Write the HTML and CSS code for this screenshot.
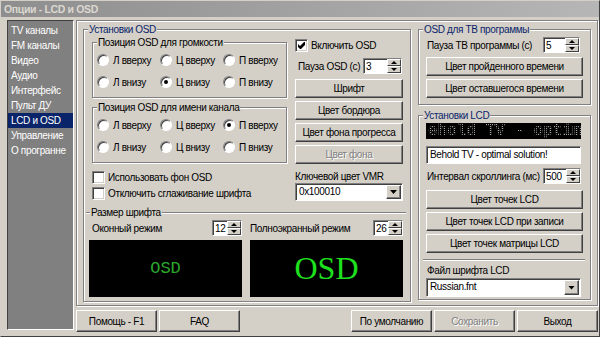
FILE: index.html
```html
<!DOCTYPE html>
<html lang="ru">
<head>
    <meta charset="UTF-8">
    <meta name="viewport" content="width=device-width, initial-scale=1.0">
    <title>Опции - LCD и OSD</title>
    <link rel="stylesheet" href="styles.css">
</head>
<body>

<div class="window">
    <div class="titlebar">Опции - LCD и OSD</div>

    <div class="frame">
        <ul class="sidebar">
            <li>TV каналы</li>
            <li>FM каналы</li>
            <li>Видео</li>
            <li>Аудио</li>
            <li>Интерфейс</li>
            <li>Пульт ДУ</li>
            <li class="active">LCD и OSD</li>
            <li>Управление</li>
            <li>О програнне</li>
        </ul>

        <div class="main">
            <div class="panel">

                <!-- Установки OSD -->
                <div class="group osd">
                    <div class="legend title">Установки OSD</div>
                    <div class="osd-top">
                        <div class="osd-left">
                            <div class="group pos">
                                <div class="legend">Позиция OSD для громкости</div>
                                <div class="radios">
                                    <div class="opt"><span class="radio"></span>Л вверху</div>
                                    <div class="opt"><span class="radio"></span>Ц вверху</div>
                                    <div class="opt"><span class="radio"></span>П вверху</div>
                                    <div class="opt"><span class="radio"></span>Л внизу</div>
                                    <div class="opt"><span class="radio on"></span>Ц внизу</div>
                                    <div class="opt"><span class="radio"></span>П внизу</div>
                                </div>
                            </div>
                            <div class="group pos second">
                                <div class="legend">Позиция OSD для имени канала</div>
                                <div class="radios">
                                    <div class="opt"><span class="radio"></span>Л вверху</div>
                                    <div class="opt"><span class="radio"></span>Ц вверху</div>
                                    <div class="opt"><span class="radio on"></span>П вверху</div>
                                    <div class="opt"><span class="radio"></span>Л внизу</div>
                                    <div class="opt"><span class="radio"></span>Ц внизу</div>
                                    <div class="opt"><span class="radio"></span>П внизу</div>
                                </div>
                            </div>
                            <div class="check-row bg-row"><span class="check"></span>Использовать фон OSD</div>
                            <div class="check-row"><span class="check"></span>Отключить сглаживание шрифта</div>
                        </div>

                        <div class="osd-right">
                            <div class="check-row enable-row">
                                <span class="check"><svg width="7" height="7" viewBox="0 0 7 7"><path d="M0 2L2 4L6 0L7 0L7 3L3 7L2 7L0 5Z"/></svg></span>Включить OSD
                            </div>
                            <div class="field-row pause-row">
                                <span>Пауза OSD (с)</span>
                                <span class="spin w39"><span class="spin-val">3</span><span class="spin-btns"><i class="up"></i><i class="dn"></i></span></span>
                            </div>
                            <div class="btn first">Шрифт</div>
                            <div class="btn">Цвет бордюра</div>
                            <div class="btn">Цвет фона прогресса</div>
                            <div class="btn disabled">Цвет фона</div>
                            <div class="label vmr">Ключевой цвет VMR</div>
                            <div class="combo vmr-combo"><span class="combo-val">0x100010</span><span class="combo-btn"><b></b></span></div>
                        </div>
                    </div>

                    <div class="fontsize">
                        <div class="legend">Размер шрифта</div>
                        <div class="fs-cols">
                            <div class="fs-col">
                                <div class="field-row">
                                    <span class="fs-label">Оконный режим</span>
                                    <span class="spin w30"><span class="spin-val">12</span><span class="spin-btns"><i class="up"></i><i class="dn"></i></span></span>
                                </div>
                                <div class="preview small">OSD</div>
                            </div>
                            <div class="fs-col">
                                <div class="field-row">
                                    <span>Полноэкранный режим</span>
                                    <span class="spin w30"><span class="spin-val">26</span><span class="spin-btns"><i class="up"></i><i class="dn"></i></span></span>
                                </div>
                                <div class="preview big">OSD</div>
                            </div>
                        </div>
                    </div>
                </div>

                <div class="right-col">
                    <!-- OSD для ТВ программы -->
                    <div class="group tv">
                        <div class="legend title">OSD для ТВ программы</div>
                        <div class="field-row tv-row">
                            <span>Пауза ТВ программы (с)</span>
                            <span class="spin w37"><span class="spin-val">5</span><span class="spin-btns"><i class="up"></i><i class="dn"></i></span></span>
                        </div>
                        <div class="btn wide first">Цвет пройденного времени</div>
                        <div class="btn wide">Цвет оставшегося времени</div>
                    </div>

                    <!-- Установки LCD -->
                    <div class="group lcd">
                        <div class="legend title">Установки LCD</div>
                        <div class="lcd-screen"><span>ehold TV - optim</span></div>
                        <div class="lcd-input">Behold TV - optimal solution!</div>
                        <div class="field-row scroll-row">
                            <span>Интервал скроллинга (мс)</span>
                            <span class="spin w38"><span class="spin-val">500</span><span class="spin-btns"><i class="up"></i><i class="dn"></i></span></span>
                        </div>
                        <div class="btn wide lcd-first">Цвет точек LCD</div>
                        <div class="btn wide">Цвет точек LCD при записи</div>
                        <div class="btn wide">Цвет точек матрицы LCD</div>
                        <div class="sep"></div>
                        <div class="label font-file">Файл шрифта LCD</div>
                        <div class="combo font-combo"><span class="combo-val">Russian.fnt</span><span class="combo-btn"><b></b></span></div>
                    </div>
                </div>
            </div>

            <div class="footer">
                <div class="footer-group">
                    <div class="btn foot">Помощь - F1</div>
                    <div class="btn foot">FAQ</div>
                </div>
                <div class="footer-group">
                    <div class="btn foot">По умолчанию</div>
                    <div class="btn foot disabled">Сохранить</div>
                    <div class="btn foot">Выход</div>
                </div>
            </div>
        </div>
    </div>
</div>

</body>
</html>
```

FILE: styles.css
```css
* {
    box-sizing: border-box;
}
body {
    margin: 0;
    background: #d4d0c8;
    font-family: "Liberation Sans", Arial, sans-serif;
    font-size: 10px;
    letter-spacing: -0.35px;
    color: #000;
}
.window {
    width: 600px;
    height: 337px;
    background: #d4d0c8;
    border: 1px solid;
    border-color: #d4d0c8 #404040 #404040 #d4d0c8;
    overflow: hidden;
}
.titlebar {
    height: 16px;
    line-height: 16px;
    padding-left: 3px;
    background: linear-gradient(to right, #8e8e8e, #b6b6b6);
    color: #dcd8d0;
    font-weight: bold;
    font-size: 10.5px;
}
.frame {
    display: flex;
    padding: 3px 0 0 6px;
}

/* левое меню */
.sidebar {
    list-style: none;
    margin: 0;
    padding: 2px 0 0;
    width: 67px;
    height: 310px;
    background: #808080;
    border: 1px solid;
    border-color: #404040 #fff #fff #404040;
    color: #fff;
}
.sidebar li {
    height: 15px;
    line-height: 15px;
    padding-left: 3px;
    white-space: nowrap;
}
.sidebar .active {
    background: #0a246a;
}

.main {
    margin-left: 2px;
    width: 522px;
}
.panel {
    display: flex;
    align-items: flex-start;
    gap: 7px;
    height: 286px;
    padding: 8px 0 0 6px;
    border: 1px solid #808080;
    box-shadow: inset 1px 1px #fff, 1px 1px #fff;
}

/* рамки групп */
.group {
    border: 1px solid #808080;
    box-shadow: inset 1px 1px #fff, 1px 1px #fff;
}
.legend {
    width: max-content;
    height: 13px;
    line-height: 13px;
    margin: -7px 0 0 4px;
    padding: 0 1px;
    background: #d4d0c8;
}
.legend.title {
    color: #0a246a;
}

.osd {
    width: 328px;
    height: 273px;
}
.osd-top {
    display: flex;
    gap: 8px;
    padding-left: 8px;
}
.osd-left {
    width: 195px;
}
.osd-right {
    width: 108px;
}
.pos {
    height: 56px;
    margin-top: 6px;
}
.pos.second {
    margin-top: 9px;
}
.radios {
    display: grid;
    grid-template-columns: 63px 63px 63px;
    grid-auto-rows: 22px;
    padding-left: 4px;
}
.opt {
    display: flex;
    align-items: center;
    gap: 4px;
    white-space: nowrap;
}
.radio {
    display: flex;
    align-items: center;
    justify-content: center;
    width: 12px;
    height: 12px;
    border-radius: 50%;
    background: #fff;
    border: 1px solid;
    border-color: #808080 #fff #fff #808080;
    box-shadow: inset 1px 1px #404040;
}
.radio.on::after {
    content: "";
    width: 4px;
    height: 4px;
    border-radius: 50%;
    background: #000;
}
.check-row {
    display: flex;
    align-items: center;
    gap: 3px;
    height: 16px;
    white-space: nowrap;
}
.check {
    display: flex;
    align-items: center;
    justify-content: center;
    width: 13px;
    height: 13px;
    background: #fff;
    border: 1px solid;
    border-color: #808080 #fff #fff #808080;
    box-shadow: inset 1px 1px #404040, inset -1px -1px #d4d0c8;
}
.bg-row {
    margin-top: 6px;
}
.enable-row {
    margin-top: 1px;
}

.field-row {
    display: flex;
    align-items: center;
    justify-content: space-between;
    height: 16px;
    white-space: nowrap;
}
.pause-row {
    margin-top: 5px;
    padding: 0 1px 0 3px;
}

/* кнопки */
.btn {
    display: flex;
    align-items: center;
    justify-content: center;
    height: 19px;
    margin-top: 3px;
    background: #d4d0c8;
    border: 1px solid;
    border-color: #fff #404040 #404040 #fff;
    box-shadow: inset -1px -1px #808080;
    white-space: nowrap;
}
.btn.first {
    margin-top: 5px;
}
.btn.disabled {
    color: #808080;
    text-shadow: 1px 1px 0 #fff;
}
.label {
    height: 12px;
    line-height: 12px;
    white-space: nowrap;
}
.vmr {
    margin-top: 7px;
}

/* поля со стрелками */
.spin {
    display: flex;
    height: 16px;
    background: #fff;
    border: 1px solid;
    border-color: #808080 #fff #fff #808080;
    box-shadow: inset 1px 1px #404040;
}
.w30 { width: 30px; }
.w37 { width: 37px; }
.w38 { width: 38px; }
.w39 { width: 39px; }
.spin-val {
    flex: 1;
    padding: 1px 0 0 2px;
    line-height: 13px;
}
.spin-btns {
    display: flex;
    flex-direction: column;
    width: 14px;
}
.spin-btns i {
    flex: 1;
    display: flex;
    align-items: center;
    justify-content: center;
    background: #d4d0c8;
    border: 1px solid;
    border-color: #fff #404040 #404040 #fff;
}
.spin-btns .up::before,
.spin-btns .dn::before {
    content: "";
    border-left: 3px solid transparent;
    border-right: 3px solid transparent;
}
.spin-btns .up::before {
    border-bottom: 3px solid #000;
}
.spin-btns .dn::before {
    border-top: 3px solid #000;
}

.combo {
    display: flex;
    height: 18px;
    background: #fff;
    border: 1px solid;
    border-color: #808080 #fff #fff #808080;
    box-shadow: inset 1px 1px #404040;
}
.combo-val {
    flex: 1;
    padding-left: 3px;
    line-height: 16px;
}
.combo-btn {
    display: flex;
    align-items: center;
    justify-content: center;
    width: 15px;
    margin: 1px;
    background: #d4d0c8;
    border: 1px solid;
    border-color: #fff #404040 #404040 #fff;
    box-shadow: inset -1px -1px #808080;
}
.combo-btn b {
    width: 7px;
    height: 4px;
    background: #000;
    clip-path: polygon(0 0, 100% 0, 50% 100%);
}

/* размер шрифта */
.fontsize {
    margin: 11px 4px 0 2px;
    border-top: 1px solid #808080;
    box-shadow: inset 0 1px #fff;
}
.fs-cols {
    display: flex;
    gap: 8px;
    margin-top: 1px;
    padding-left: 3px;
}
.fs-col {
    width: 153px;
}
.fs-label {
    padding-left: 3px;
}
.preview {
    display: flex;
    align-items: center;
    justify-content: center;
    height: 57px;
    margin-top: 4px;
    background: #000;
    letter-spacing: 0;
}
.preview.small {
    color: #2aa82a;
    font-family: "Liberation Mono", monospace;
    font-size: 17px;
}
.preview.big {
    color: #1ee01e;
    font-family: "Liberation Serif", serif;
    font-size: 32px;
}

/* правая колонка */
.right-col {
    display: flex;
    flex-direction: column;
    gap: 10px;
    width: 173px;
}
.tv {
    height: 76px;
}
.tv-row {
    margin-top: 1px;
    padding: 0 10px 0 8px;
}
.btn.wide {
    margin-left: 7px;
    margin-right: 7px;
}
.btn.wide.first {
    margin-top: 4px;
}
.lcd {
    height: 185px;
}
.lcd-screen {
    height: 16px;
    margin: 1px 9px 0 7px;
    padding-left: 2px;
    background: #000;
    overflow: hidden;
    white-space: nowrap;
    font-family: "Liberation Mono", monospace;
    font-weight: bold;
    font-size: 16px;
    line-height: 16px;
    letter-spacing: 0;
}
.lcd-screen span {
    background:
        linear-gradient(90deg, transparent 1px, #000 1px) 0 0 / 2px 2px,
        linear-gradient(transparent 1px, #000 1px) 0 0 / 2px 2px,
        #a8a8a8;
    -webkit-background-clip: text;
    background-clip: text;
    color: transparent;
}
.lcd-input {
    height: 18px;
    margin: 7px 9px 0 7px;
    padding-left: 3px;
    line-height: 16px;
    background: #fff;
    border: 1px solid;
    border-color: #808080 #fff #fff #808080;
    box-shadow: inset 1px 1px #404040;
}
.scroll-row {
    margin-top: 4px;
    padding: 0 9px 0 8px;
}
.btn.lcd-first {
    margin-top: 6px;
}
.sep {
    height: 2px;
    margin: 6px 5px 0 4px;
    border-top: 1px solid #808080;
    border-bottom: 1px solid #fff;
}
.font-file {
    margin-top: 4px;
    padding-left: 8px;
}
.font-combo {
    height: 19px;
    margin: 1px 9px 0 7px;
}

/* нижняя панель */
.footer {
    display: flex;
    justify-content: space-between;
    height: 22px;
    margin-top: 4px;
}
.footer-group {
    display: flex;
    gap: 2px;
}
.btn.foot {
    width: 81px;
    height: 22px;
    margin-top: 0;
}
```
